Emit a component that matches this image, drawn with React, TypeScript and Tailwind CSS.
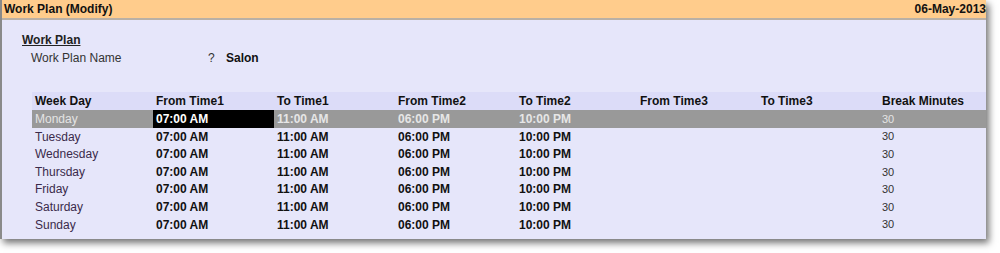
import React from "react"

type PlanRow = {
  day: string
  from1: string
  to1: string
  from2: string
  to2: string
  from3: string
  to3: string
  breakMinutes: string
}

const days = ["Monday", "Tuesday", "Wednesday", "Thursday", "Friday", "Saturday", "Sunday"]

const rows: PlanRow[] = days.map((day) => ({
  day,
  from1: "07:00 AM",
  to1: "11:00 AM",
  from2: "06:00 PM",
  to2: "10:00 PM",
  from3: "",
  to3: "",
  breakMinutes: "30",
}))

const headers = ["Week Day", "From Time1", "To Time1", "From Time2", "To Time2", "From Time3", "To Time3", "Break Minutes"]

export default function App() {
  return (
    <div className="w-[1000px] h-[253px] bg-white font-['Liberation_Sans',Arial,sans-serif] text-[12px]">
      <div className="w-[986px] h-[239px] bg-[#e6e6fa] border-l-2 border-[#8a8a8a] shadow-[3px_4px_7px_rgba(0,0,0,0.55)]">
        {/* Title bar */}
        <div className="h-[20px] bg-[#ffcc8c] border-b-2 border-[#b9b0a6] flex items-center justify-between pl-[2px] pr-0 font-bold text-[#111]">
          <span>Work Plan (Modify)</span>
          <span>06-May-2013</span>
        </div>

        <div className="pt-[13px]">
          <div className="pl-[20px] font-bold underline text-[#222] leading-[14px]">Work Plan</div>
          <div className="flex pl-[29px] mt-[4px] leading-[14px]">
            <span className="w-[177px] text-[#333]">Work Plan Name</span>
            <span className="w-[18px] text-[#333]">?</span>
            <span className="font-bold text-[#111]">Salon</span>
          </div>

          {/* Schedule grid */}
          <div className="ml-[30px] mt-[27px]">
            <div className="grid grid-cols-[121px_121px_121px_121px_121px_121px_121px_106px] h-[18px] items-center bg-[#dcdcf8] font-bold text-[#111]">
              {headers.map((h) => (
                <span key={h} className="pl-[3px]">{h}</span>
              ))}
            </div>
            {rows.map((r, i) => {
              const selected = i === 0
              return (
                <div
                  key={r.day}
                  className={`grid grid-cols-[121px_121px_121px_121px_121px_121px_121px_106px] h-[17.6px] items-center ${
                    selected ? "bg-[#999999] text-[#e6e6e6]" : "text-[#111]"
                  }`}
                >
                  <span className={`pl-[3px] ${selected ? "text-[#e4e4e4]" : "text-[#3a2a4a]"}`}>{r.day}</span>
                  <span className={`pl-[3px] font-bold h-full flex items-center ${selected ? "bg-black text-white" : ""}`}>{r.from1}</span>
                  <span className="pl-[3px] font-bold">{r.to1}</span>
                  <span className="pl-[3px] font-bold">{r.from2}</span>
                  <span className="pl-[3px] font-bold">{r.to2}</span>
                  <span className="pl-[3px] font-bold">{r.from3}</span>
                  <span className="pl-[3px] font-bold">{r.to3}</span>
                  <span className={`pl-[3px] text-[11px] ${selected ? "text-[#e4e4e4]" : "text-[#333]"}`}>{r.breakMinutes}</span>
                </div>
              )
            })}
          </div>
        </div>
      </div>
    </div>
  )
}
